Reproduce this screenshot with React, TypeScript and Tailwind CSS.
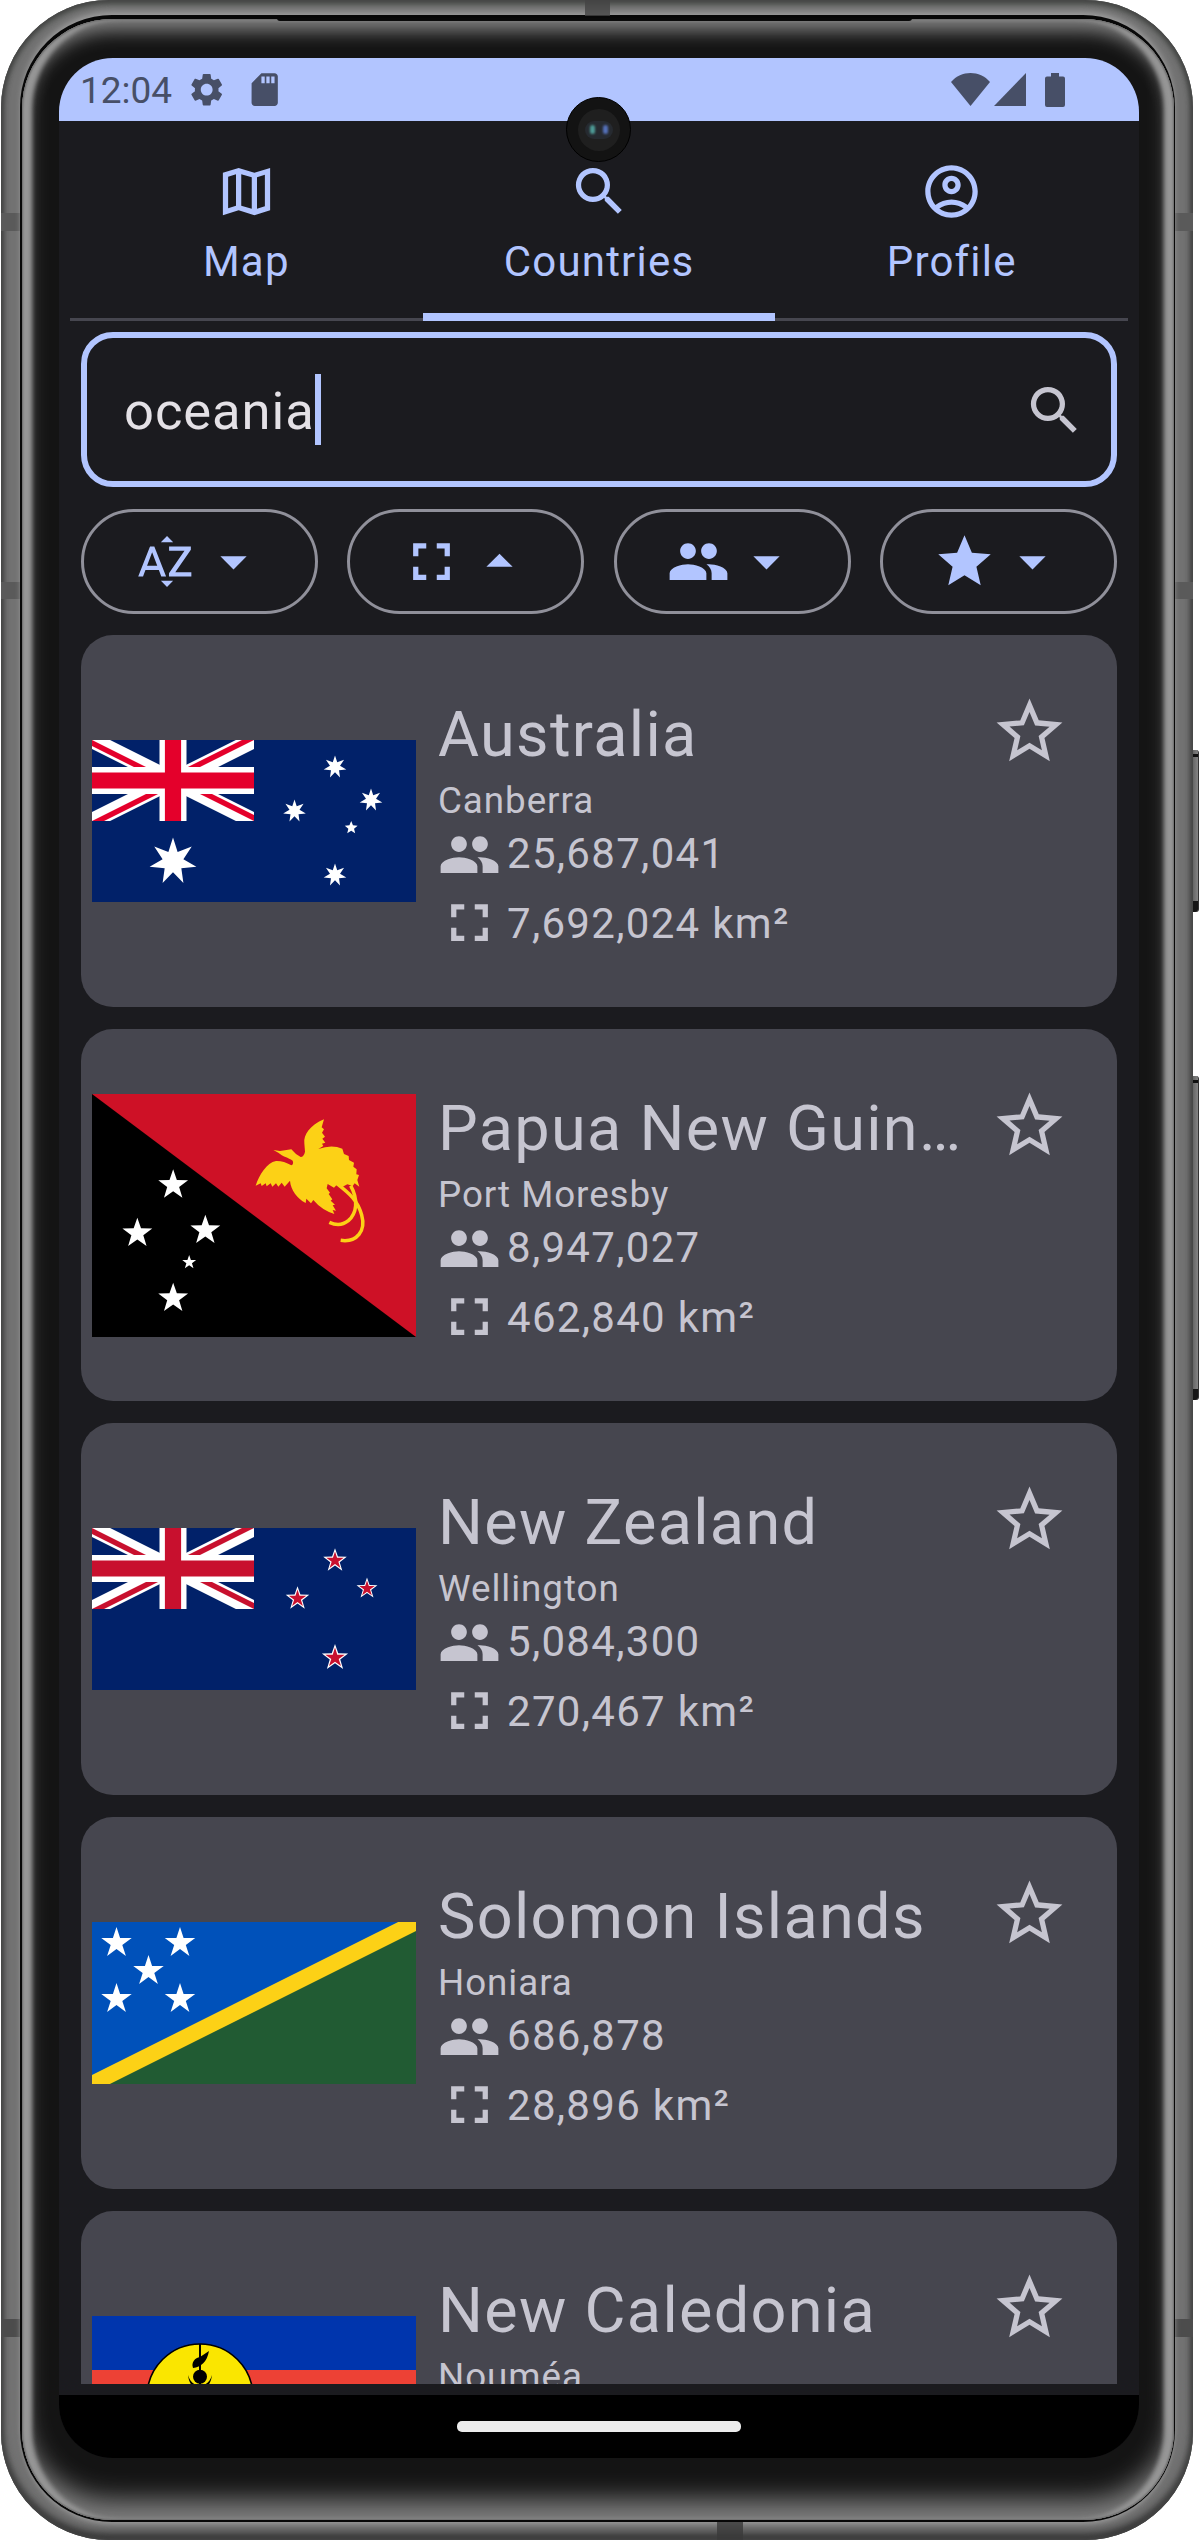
import React from "react";
import {
  MdArrowDropDown,
  MdArrowDropUp,
  MdFullscreen,
  MdGroup,
  MdSdCard,
  MdSearch,
  MdSettings,
  MdSortByAlpha,
  MdStar,
  MdStarBorder,
} from "react-icons/md";

function starPoints(cx: number, cy: number, r: number, inner: number, n = 5) {
  const pts: string[] = [];
  for (let i = 0; i < n * 2; i++) {
    const a = (Math.PI * i) / n - Math.PI / 2;
    const rr = i % 2 === 0 ? r : r * inner;
    pts.push(`${(cx + rr * Math.cos(a)).toFixed(2)},${(cy + rr * Math.sin(a)).toFixed(2)}`);
  }
  return pts.join(" ");
}

function UnionJack({ id, red }: { id: string; red: string }) {
  return (
    <svg x="0" y="0" width="162" height="81" viewBox="0 0 60 30">
      <clipPath id={id}>
        <path d="M30,15h30v15zv15h-30zh-30v-15zv-15h30z" />
      </clipPath>
      <path d="M0,0L60,30M60,0L0,30" stroke="#fff" strokeWidth="6" />
      <path d="M0,0L60,30M60,0L0,30" stroke={red} strokeWidth="4" clipPath={`url(#${id})`} />
      <path d="M30,0v30M0,15h60" stroke="#fff" strokeWidth="10" />
      <path d="M30,0v30M0,15h60" stroke={red} strokeWidth="6" />
    </svg>
  );
}

function AustraliaFlag() {
  return (
    <svg viewBox="0 0 324 162" className="block h-[162px] w-[324px]">
      <rect width="324" height="162" fill="#012169" />
      <UnionJack id="uj-au" red="#e4002b" />
      <g fill="#fff">
        <polygon points={starPoints(81, 121.5, 24, 0.444, 7)} />
        <polygon points={starPoints(243, 27, 11.6, 0.444, 7)} />
        <polygon points={starPoints(202.5, 71, 11.6, 0.444, 7)} />
        <polygon points={starPoints(279, 60, 11.6, 0.444, 7)} />
        <polygon points={starPoints(243, 135, 11.6, 0.444, 7)} />
        <polygon points={starPoints(259.2, 87.75, 6.75, 0.444)} />
      </g>
    </svg>
  );
}

function PapuaFlag() {
  return (
    <svg viewBox="96 162 972 729" className="block h-[243px] w-[324px]">
      <rect x="96" y="162" width="972" height="729" fill="#ce1126" />
      <path d="M96 162V891H1068Z" fill="#000" />
      <g fill="#fff">
        <polygon points={starPoints(339.5, 435, 47, 0.4)} />
        <polygon points={starPoints(232, 580, 47, 0.4)} />
        <polygon points={starPoints(436, 571, 47, 0.4)} />
        <polygon points={starPoints(387.5, 667, 22, 0.4)} />
        <polygon points={starPoints(339.5, 775, 47, 0.4)} />
      </g>
      <path
        fill="#fcd116"
        d="M792 238C750 255 730 285 733 310L735 335Q732 350 722 351Q708 345 694 328L660 333L640 330L655 338C668 350 685 352 698 362Q702 372 694 376Q670 362 648 363C620 368 598 405 587 437L602 430L605 438L617 430L620 439L632 430L637 440L648 430L655 440L665 428L674 440L690 422C692 450 712 475 737 489L739 476L753 490L760 480Q785 510 823 522L818 510L828 512L818 496L825 494L812 482L817 478L806 462L810 458L800 445L803 432L822 443L832 433L848 440L862 433L878 438L884 430L898 440L892 420L897 405L889 403L890 388L880 380L882 368L867 360L866 348L852 342L847 326Q815 312 775 327L790 318L786 311L796 308L787 296L795 290L786 278L792 268L785 262Z"
      />
      <g fill="none" stroke="#fcd116" strokeWidth="10.5">
        <path d="M830 430C868 460 893 480 905 525C918 572 892 608 842 601" />
        <path d="M872 437C896 480 890 520 865 542Q840 562 808 547" />
      </g>
    </svg>
  );
}

function NewZealandFlag() {
  const stars: [number, number, number][] = [
    [243, 32.6, 12.4],
    [275, 60.6, 11],
    [205.5, 70.6, 12.4],
    [243, 129.8, 13.8],
  ];
  return (
    <svg viewBox="0 0 324 162" className="block h-[162px] w-[324px]">
      <rect width="324" height="162" fill="#012169" />
      <UnionJack id="uj-nz" red="#c8102e" />
      {stars.map(([x, y, r]) => (
        <g key={`${x}-${y}`}>
          <polygon points={starPoints(x, y, r, 0.4)} fill="#fff" />
          <polygon points={starPoints(x, y, r * 0.74, 0.382)} fill="#c8102e" />
        </g>
      ))}
    </svg>
  );
}

function SolomonFlag() {
  return (
    <svg viewBox="0 0 324 162" className="block h-[162px] w-[324px]">
      <rect width="324" height="162" fill="#0051ba" />
      <path d="M0 162L324 0V162Z" fill="#215b33" />
      <path d="M-20 172L344 -10" stroke="#fcd116" strokeWidth="16" />
      <g fill="#fff">
        <polygon points={starPoints(24.5, 21, 16, 0.382)} />
        <polygon points={starPoints(88, 21, 16, 0.382)} />
        <polygon points={starPoints(56.5, 49, 16, 0.382)} />
        <polygon points={starPoints(24.5, 77, 16, 0.382)} />
        <polygon points={starPoints(88, 77, 16, 0.382)} />
      </g>
    </svg>
  );
}

function NewCaledoniaFlag() {
  return (
    <svg viewBox="0 0 324 162" className="block h-[162px] w-[324px]">
      <rect width="324" height="162" fill="#009543" />
      <rect width="324" height="108" fill="#ed4135" />
      <rect width="324" height="54" fill="#0035ad" />
      <circle cx="108" cy="81" r="53" fill="#fae600" stroke="#000" strokeWidth="1.6" />
      <path d="M108 28V140" stroke="#000" strokeWidth="2" />
      <path d="M117 35C115 46 109 51 101 52C99 46 103 42 108 41Z" fill="#000" />
      <circle cx="108" cy="60.8" r="7" fill="#000" />
      <path d="M96 59C97 68 102 74 108 75C114 74 119 68 120 59C118 66 114 69 108 70C102 69 98 66 96 59Z" fill="#000" />
    </svg>
  );
}

const countries = [
  { name: "Australia", capital: "Canberra", population: "25,687,041", area: "7,692,024 km²", Flag: AustraliaFlag },
  { name: "Papua New Guinea", capital: "Port Moresby", population: "8,947,027", area: "462,840 km²", Flag: PapuaFlag },
  { name: "New Zealand", capital: "Wellington", population: "5,084,300", area: "270,467 km²", Flag: NewZealandFlag },
  { name: "Solomon Islands", capital: "Honiara", population: "686,878", area: "28,896 km²", Flag: SolomonFlag },
  { name: "New Caledonia", capital: "Nouméa", Flag: NewCaledoniaFlag },
];

function MapIcon() {
  return (
    <svg viewBox="0 0 24 24" className="size-[63px]" fill="currentColor" fillRule="evenodd">
      <path d="M3 4.9L9 3L15 4.9L21 3V19.1L15 21L9 19.1L3 21ZM5 6.4V18.4L8 17.4V5.4ZM10 5.4V17.4L14 18.6V6.6ZM16 6.6V18.6L19 17.6V5.6Z" />
    </svg>
  );
}

function AccountIcon() {
  return (
    <svg viewBox="0 0 24 24" className="size-[63px]" fill="currentColor">
      <path d="M12 2C6.48 2 2 6.48 2 12s4.48 10 10 10 10-4.48 10-10S17.52 2 12 2zM7.35 18.5C8.66 17.56 10.26 17 12 17s3.34.56 4.65 1.5C15.34 19.44 13.74 20 12 20s-3.34-.56-4.65-1.5zm10.79-1.38C16.45 15.8 14.32 15 12 15s-4.45.8-6.14 2.12C4.7 15.73 4 13.95 4 12c0-4.42 3.58-8 8-8s8 3.58 8 8c0 1.95-.7 3.73-1.86 5.12zM12 6c-1.93 0-3.5 1.57-3.5 3.5S10.07 13 12 13s3.5-1.57 3.5-3.5S13.93 6 12 6zm0 5c-.83 0-1.5-.67-1.5-1.5S11.17 8 12 8s1.5.67 1.5 1.5S12.83 11 12 11z" />
    </svg>
  );
}

function StatusBar() {
  return (
    <div className="flex h-[63px] shrink-0 items-center bg-[#b2c5ff] pr-[74px] pl-[21px] text-[#474f67]">
      <span className="mt-[2px] w-[93px] text-[37px] leading-[44px]">12:04</span>
      <MdSettings className="ml-[14px] size-[39.4px]" />
      <MdSdCard className="ml-[19px] size-[39.4px]" />
      <svg viewBox="0 0 39 33" className="ml-auto h-[33px] w-[39px]" fill="currentColor">
        <path d="M0 9C10 -3 29 -3 39 9L19.5 33Z" />
      </svg>
      <svg viewBox="0 0 32 33" className="ml-[4px] h-[33px] w-[32px]" fill="currentColor">
        <path d="M32 0V33H0Z" />
      </svg>
      <svg viewBox="0 0 20 34" className="ml-[19px] h-[34px] w-[20px]" fill="currentColor">
        <path d="M6 0H14V3.5H18Q20 3.5 20 5.5V32Q20 34 18 34H2Q0 34 0 32V5.5Q0 3.5 2 3.5H6Z" />
      </svg>
    </div>
  );
}

function Tab({ label, active, children }: { label: string; active?: boolean; children: React.ReactNode }) {
  return (
    <button className="flex flex-1 flex-col items-center pt-[39px] text-[#b2c5ff]">
      {children}
      <span className="mt-[13px] text-[42px] leading-[52px] tracking-[1.2px]">{label}</span>
      <span className={active ? "mt-auto h-[8px] w-full bg-[#b2c5ff]" : "mt-auto h-[3px] w-full bg-[#46464f]"} />
    </button>
  );
}

function FilterChip({ up, children }: { up?: boolean; children: React.ReactNode }) {
  const Arrow = up ? MdArrowDropUp : MdArrowDropDown;
  return (
    <button className="flex h-[105px] w-[237px] items-center justify-center gap-[5px] rounded-full border-[3px] border-[#90909a] text-[#b2c5ff]">
      {children}
      <Arrow className="size-[63px]" />
    </button>
  );
}

type Country = {
  name: string;
  capital: string;
  population?: string;
  area?: string;
  Flag: () => React.JSX.Element;
};

function CountryCard({ name, capital, population, area, Flag }: Country) {
  return (
    <article className="flex h-[372px] shrink-0 rounded-[32px] bg-[#46464f] pr-[48px] pl-[11px] text-[#c6c5d0]">
      <div className="flex w-[324px] shrink-0 items-center">
        <Flag />
      </div>
      <div className="ml-[22px] flex min-w-0 flex-1 flex-col pt-[58px]">
        <div className="flex">
          <h2 className="min-w-0 flex-1 truncate pr-[16px] text-[63px] leading-[83px] tracking-[1.3px]">{name}</h2>
          <MdStarBorder className="-mt-px -mb-4 size-[79px] shrink-0" />
        </div>
        <p className="mt-px text-[36.75px] leading-[47px] tracking-[0.95px]">{capital}</p>
        {population && (
          <div className="-mt-px flex h-[63px] items-center gap-[6px]">
            <MdGroup className="size-[63px]" />
            <span className="-mt-[2px] text-[42px] leading-[52px] tracking-[1.3px]">{population}</span>
          </div>
        )}
        {area && (
          <div className="mt-[5px] flex h-[63px] items-center gap-[6px]">
            <MdFullscreen className="size-[63px]" />
            <span className="mt-[2px] text-[42px] leading-[52px] tracking-[1.3px]">{area}</span>
          </div>
        )}
      </div>
    </article>
  );
}

function Screen() {
  return (
    <div className="flex h-[2400px] w-[1080px] flex-col overflow-hidden rounded-[54px] bg-[#1b1b1f]">
      <StatusBar />
      <nav className="mr-[11px] ml-[11px] flex h-[200px] shrink-0">
        <Tab label="Map">
          <MapIcon />
        </Tab>
        <Tab label="Countries" active>
          <MdSearch className="size-[63px]" />
        </Tab>
        <Tab label="Profile">
          <AccountIcon />
        </Tab>
      </nav>
      <main className="flex min-h-0 flex-1 flex-col px-[22px] pt-[11px]">
        <div className="flex h-[155px] shrink-0 items-center rounded-[32px] border-[6px] border-[#b2c5ff] pr-[25px] pl-[37px]">
          <span className="mt-[2px] text-[52.5px] leading-[62px] tracking-[0.95px] text-[#e4e1e6]">oceania</span>
          <span className="h-[71px] w-[6px] bg-[#b2c5ff]" />
          <MdSearch className="mt-px ml-auto size-[63px] text-[#c6c5d0]" />
        </div>
        <div className="mt-[22px] flex shrink-0 justify-between">
          <FilterChip>
            <MdSortByAlpha className="size-[63px]" />
          </FilterChip>
          <FilterChip up>
            <MdFullscreen className="size-[63px]" />
          </FilterChip>
          <FilterChip>
            <MdGroup className="size-[63px]" />
          </FilterChip>
          <FilterChip>
            <MdStar className="size-[63px]" />
          </FilterChip>
        </div>
        <div className="mt-[21px] mb-[11px] flex min-h-0 flex-1 flex-col gap-[22px] overflow-hidden">
          {countries.map((c) => (
            <CountryCard key={c.name} {...c} />
          ))}
        </div>
      </main>
      <div className="flex h-[63px] shrink-0 items-center justify-center bg-black">
        <div className="h-[11px] w-[284px] rounded-[5px] bg-[#ececec]" />
      </div>
    </div>
  );
}

function SideButton({ className }: { className: string }) {
  return (
    <div className={`absolute left-[1191px] w-[8px] rounded-r-[3px] border-r border-[#333] bg-gradient-to-r from-[#5a5a5a] to-[#858585] ${className}`}>
      <div className="mt-[4px] h-[3px] bg-[#111]" />
      <div className="absolute bottom-0 h-[11px] w-full rounded-br-[3px] bg-[#161616]" />
    </div>
  );
}

export default function App() {
  return (
    <div className="relative h-[2541px] w-[1200px] overflow-hidden bg-white font-['Roboto',sans-serif]">
      <SideButton className="top-[750px] h-[162px]" />
      <SideButton className="top-[1076px] h-[324px]" />
      <div className="relative ml-[1px] h-[2540px] w-[1192px] overflow-hidden rounded-[108px] bg-[#727272] pt-[15px] pr-[18px] pb-[18px] pl-[19px] shadow-[inset_0_0_4px_2px_#444,inset_0_4px_6px_0_#4c504c,inset_0_-7px_8px_0_#333]">
        <div className="absolute top-[213px] left-0 h-[18px] w-full bg-[#5a5a5a]" />
        <div className="absolute top-[582px] left-0 h-[17px] w-full bg-[#5a5a5a]" />
        <div className="absolute top-[2319px] left-0 h-[18px] w-full bg-[#4c4c4c]" />
        <div className="relative h-full rounded-[92px] bg-[#080808] pt-[4px] pr-px pb-[2px] pl-[2px] shadow-[0_-5px_7px_-2px_#a0a0a0,0_4px_5px_-2px_#999]">
          <div className="h-full rounded-[90px] bg-[#141414] pt-[39px] pr-[35px] pb-[62px] pl-[37px] shadow-[inset_0_0_2px_1px_#6a6a6a,inset_10px_0_4px_0_#969696,inset_-10px_0_4px_0_#969696,inset_0_12px_18px_0_#808080,inset_0_-20px_26px_0_#808080]">
            <Screen />
          </div>
        </div>
        <div className="absolute top-0 left-[584px] h-[16px] w-[25px] bg-[#444]/80" />
        <div className="absolute bottom-0 left-[716px] h-[18px] w-[26px] bg-[#3a3a3a]/80" />
        <div className="absolute top-[18px] left-[276px] h-[3px] w-[635px] rounded-b-[3px] bg-[#0a0a0a]" />
      </div>
      <div className="absolute top-[97px] left-[566px] flex size-[65px] items-center justify-center rounded-full border border-black bg-[#131313]">
        <div className="flex size-[42px] items-center justify-center rounded-full bg-[#1f1f1f]">
          <div className="flex h-[18px] w-[28px] items-center justify-between rounded-full bg-[#262a30] px-[5px]">
            <span className="h-[9px] w-[5px] rounded-full bg-[#4d9a96] blur-[1px]" />
            <span className="h-[9px] w-[5px] rounded-full bg-[#5470b8] blur-[1px]" />
          </div>
        </div>
      </div>
    </div>
  );
}
